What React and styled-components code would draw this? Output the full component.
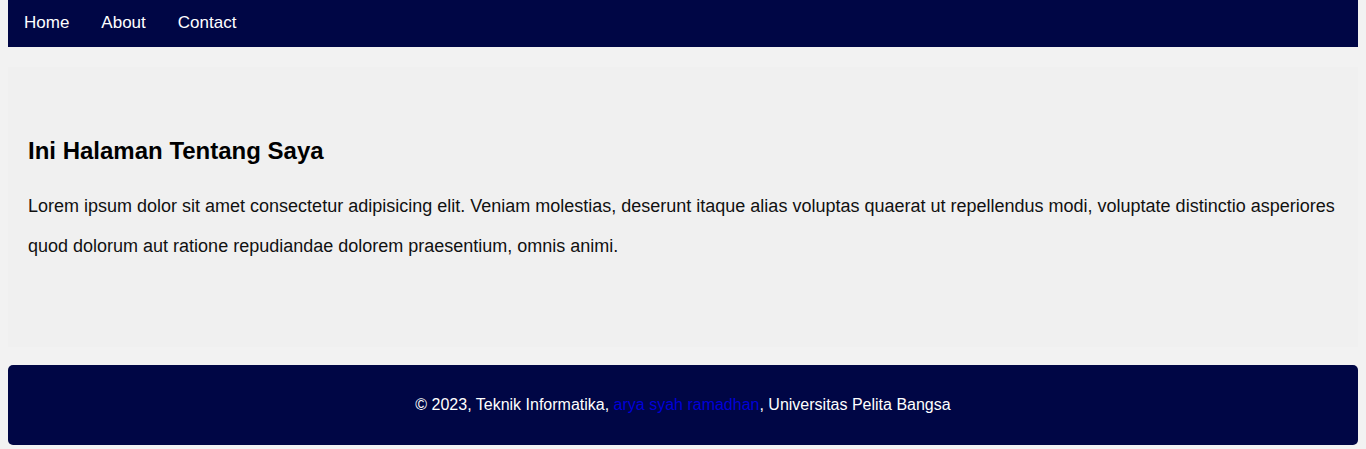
import React from 'react'
import styled, { createGlobalStyle } from 'styled-components'

const GlobalStyle = createGlobalStyle`
    body {
        margin: 0 8px 8px;
        background-color: #f2f2f2;
        font-family: "Liberation Sans", Arial, sans-serif;
    }
`

const Nav = styled.nav`
    display: flex;
    background-color: #000645;
`

const NavLink = styled.a`
    padding: 13px 16px 14px;
    font-size: 17px;
    line-height: 20px;
    color: #fff;
    text-decoration: none;
    cursor: pointer;
`

const Section = styled.section`
    margin-top: 20px;
    padding: 50px 20px 81px;
    background-color: #f0f0f0;
`

const Title = styled.h2`
    margin: 20px 0 21px;
    font-size: 24px;
    font-weight: 700;
    color: #000;
`

const Text = styled.p`
    margin: 0;
    font-size: 18px;
    line-height: 40px;
    color: #111;
`

const Footer = styled.footer`
    margin-top: 18px;
    padding: 30px 0;
    border-radius: 5px;
    background-color: #000645;
    color: #fff;
    text-align: center;
    font-size: 16px;
    line-height: 20px;
`

const Author = styled.a`
    color: #0000d8;
    text-decoration: none;
`

const App = () => {
    return (
        <>
            <GlobalStyle />
            <Nav>
                <NavLink>Home</NavLink>
                <NavLink>About</NavLink>
                <NavLink>Contact</NavLink>
            </Nav>
            <Section>
                <Title>Ini Halaman Tentang Saya</Title>
                <Text>
                    Lorem ipsum dolor sit amet consectetur adipisicing elit. Veniam molestias, deserunt itaque alias voluptas quaerat ut repellendus modi, voluptate distinctio asperiores quod dolorum aut ratione repudiandae dolorem praesentium, omnis animi.
                </Text>
            </Section>
            <Footer>
                © 2023, Teknik Informatika, <Author>arya syah ramadhan</Author>, Universitas Pelita Bangsa
            </Footer>
        </>
    )
}

export default App
